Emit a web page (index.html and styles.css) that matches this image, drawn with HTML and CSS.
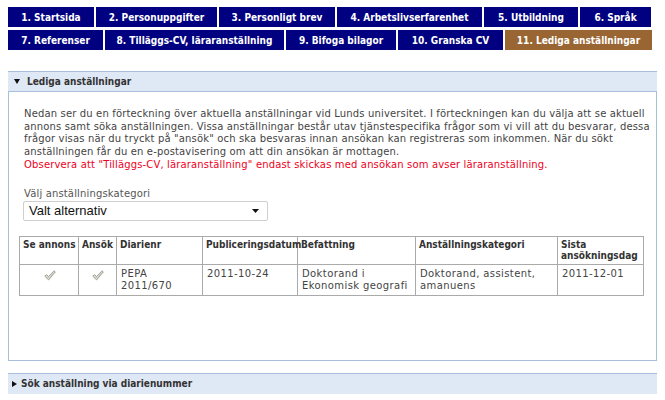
FILE: index.html
```html
<!DOCTYPE html>
<html lang="sv">
<head>
<meta charset="utf-8">
<title>Lediga anställningar</title>
<link rel="stylesheet" href="styles.css">
</head>
<body>
<nav class="tabs">
  <div class="tabrow row1">
    <a class="tab">1. Startsida</a>
    <a class="tab">2. Personuppgifter</a>
    <a class="tab">3. Personligt brev</a>
    <a class="tab">4. Arbetslivserfarenhet</a>
    <a class="tab">5. Utbildning</a>
    <a class="tab">6. Språk</a>
  </div>
  <div class="tabrow row2">
    <a class="tab">7. Referenser</a>
    <a class="tab">8. Tilläggs-CV, läraranställning</a>
    <a class="tab">9. Bifoga bilagor</a>
    <a class="tab">10. Granska CV</a>
    <a class="tab active">11. Lediga anställningar</a>
  </div>
</nav>

<section class="section open">
  <div class="section-head">
    <svg class="tri" width="6" height="5" viewBox="0 0 6 5"><path d="M0 0H6L3 5Z" fill="#111"/></svg>
    <span>Lediga anställningar</span>
  </div>
  <div class="panel">
    <p class="intro">Nedan ser du en förteckning över aktuella anställningar vid Lunds universitet. I förteckningen kan du välja att se aktuell<br>annons samt söka anställningen. Vissa anställningar består utav tjänstespecifika frågor som vi vill att du besvarar, dessa<br>frågor visas när du tryckt på "ansök" och ska besvaras innan ansökan kan registreras som inkommen. När du sökt<br>anställningen får du en e-postavisering om att din ansökan är mottagen.</p>
    <p class="note">Observera att "Tilläggs-CV, läraranställning" endast skickas med ansökan som avser läraranställning.</p>
    <label class="label">Välj anställningskategori</label>
    <div class="select">
      <span>Valt alternativ</span>
      <svg width="7" height="4" viewBox="0 0 7 4"><path d="M0 0H7L3.5 4Z" fill="#111"/></svg>
    </div>
    <table class="jobs">
      <colgroup>
        <col class="c1"><col class="c2"><col class="c3"><col class="c4"><col class="c5"><col class="c6"><col class="c7">
      </colgroup>
      <thead>
        <tr>
          <th>Se annons</th>
          <th>Ansök</th>
          <th>Diarienr</th>
          <th>Publiceringsdatum</th>
          <th>Befattning</th>
          <th>Anställningskategori</th>
          <th>Sista ansökningsdag</th>
        </tr>
      </thead>
      <tbody>
        <tr>
          <td class="icon"><svg width="12" height="11" viewBox="0 0 12 11"><path d="M0.8 6.2 L2.6 4.6 L4.6 6.6 L10.1 0.7 L11.4 1.9 L4.6 9.9 Z" fill="#d7d7cd" stroke="#9c9c92" stroke-width="0.9" stroke-linejoin="round"/></svg></td>
          <td class="icon"><svg width="12" height="11" viewBox="0 0 12 11"><path d="M0.8 6.2 L2.6 4.6 L4.6 6.6 L10.1 0.7 L11.4 1.9 L4.6 9.9 Z" fill="#d7d7cd" stroke="#9c9c92" stroke-width="0.9" stroke-linejoin="round"/></svg></td>
          <td>PEPA 2011/670</td>
          <td>2011-10-24</td>
          <td>Doktorand i Ekonomisk geografi</td>
          <td>Doktorand, assistent, amanuens</td>
          <td>2011-12-01</td>
        </tr>
      </tbody>
    </table>
  </div>
</section>

<section class="section closed">
  <div class="section-head">
    <svg class="tri" width="5" height="6" viewBox="0 0 5 6"><path d="M0 0V6L5 3Z" fill="#111"/></svg>
    <span>Sök anställning via diarienummer</span>
  </div>
</section>
</body>
</html>
```
FILE: styles.css
```css
* { box-sizing: border-box; }
html, body { background: #fff; }
body {
  margin: 0;
  padding: 7px 8px 0 8px;
  font-family: "DejaVu Sans", Verdana, sans-serif;
  font-size: 10px;
  letter-spacing: 0.15px;
  color: #444;
}
.tabs { display: flex; flex-direction: column; gap: 3px; }
.tabrow { display: grid; gap: 2px; height: 20px; }
.row1 { grid-template-columns: 86px 121px 116px 145px 94px 71px; }
.row2 { grid-template-columns: 95px 179px 110px 105px 147px; }
.tab {
  background: #000080;
  color: #fff;
  font-family: "DejaVu Sans Condensed", "DejaVu Sans", sans-serif;
  font-weight: bold;
  font-size: 10px;
  letter-spacing: 0;
  display: flex;
  align-items: center;
  justify-content: center;
  white-space: nowrap;
}
.tab.active { background: #996633; }

.section { width: 649px; }
.section.open { margin-top: 21px; }
.section.closed { margin-top: 12px; }
.section-head {
  height: 21px;
  background: #dfe8f5;
  border-top: 1px solid #a7bfdd;
  display: flex;
  align-items: center;
  padding-left: 6px;
  font-family: "DejaVu Sans Condensed", "DejaVu Sans", sans-serif;
  font-weight: bold;
  letter-spacing: 0;
  color: #333;
}
.section-head .tri { margin-right: 7px; }
.section.open .section-head { border-bottom: 1px solid #a7bfdd; height: 21px; }
.section.closed .section-head { padding-left: 4px; }
.section.closed .section-head .tri { margin-right: 4px; }
.panel {
  border: 1px solid #a7bfdd;
  border-top: none;
  padding: 16px 10px 64px 10px;
}
.intro, .note {
  margin: 0 0 0 5px;
  line-height: 12.5px;
  white-space: nowrap;
}
.note { color: #ee0022; margin-top: 1px; }
.label {
  display: block;
  margin: 16px 0 1px 5px;
  color: #555;
  line-height: 12px;
}
.select {
  width: 245px;
  height: 20px;
  margin-left: 4px;
  border: 1px solid #cfcfcf;
  border-radius: 2px;
  display: flex;
  align-items: center;
  justify-content: space-between;
  padding: 0 8px 0 5px;
  font-family: "Liberation Sans", Arial, sans-serif;
  font-size: 13px;
  letter-spacing: 0;
  color: #111;
}
.jobs {
  margin-top: 15px;
  border-collapse: collapse;
  table-layout: fixed;
  width: 624px;
  border: 1px solid #aaa;
}
.c1 { width: 59px; } .c2 { width: 38px; } .c3 { width: 86px; } .c4 { width: 95px; }
.c5 { width: 118px; } .c6 { width: 142px; } .c7 { width: 86px; }
.jobs th, .jobs td {
  border: 1px solid #aaa;
  vertical-align: top;
  text-align: left;
}
.jobs th {
  font-family: "DejaVu Sans Condensed", "DejaVu Sans", sans-serif;
  font-weight: bold;
  letter-spacing: 0;
  color: #333;
  padding: 2px 2px 3px 3px;
  line-height: 11px;
  height: 27px;
}
.jobs td {
  padding: 3px 3px 3px 4px;
  line-height: 12px;
  height: 31px;
  letter-spacing: 0.4px;
  color: #444;
}
.jobs td.icon { text-align: center; padding-top: 5px; }
.jobs td.icon svg { display: inline-block; }
```
